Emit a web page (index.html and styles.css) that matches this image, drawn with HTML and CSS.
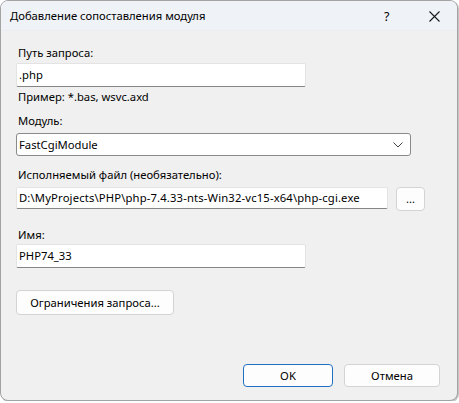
FILE: index.html
```html
<!DOCTYPE html>
<html lang="ru">
<head>
<meta charset="utf-8">
<title>Добавление сопоставления модуля</title>
<link rel="stylesheet" href="styles.css">
</head>
<body>
<div class="window">
  <div class="titlebar">
    <span class="title">Добавление сопоставления модуля</span>
    <span class="help">?</span>
    <span class="close">
      <svg width="11" height="11" viewBox="0 0 11 11"><path d="M0.5 0.5 L10.5 10.5 M10.5 0.5 L0.5 10.5" stroke="#1a1a1a" stroke-width="1.1" fill="none"/></svg>
    </span>
  </div>
  <div class="content">
    <div class="label first">Путь запроса:</div>
    <div class="input short">.php</div>
    <div class="hint">Пример: *.bas, wsvc.axd</div>
    <div class="label l-module">Модуль:</div>
    <div class="select">
      <span>FastCgiModule</span>
      <svg width="10" height="6" viewBox="0 0 10 6"><path d="M0.5 0.5 L5 5 L9.5 0.5" stroke="#444" stroke-width="1" fill="none"/></svg>
    </div>
    <div class="label l-exe">Исполняемый файл (необязательно):</div>
    <div class="row">
      <div class="input exe">D:\MyProjects\PHP\php-7.4.33-nts-Win32-vc15-x64\php-cgi.exe</div>
      <button class="btn browse">...</button>
    </div>
    <div class="label l-name">Имя:</div>
    <div class="input short">PHP74_33</div>
    <button class="btn limits">Ограничения запроса...</button>
    <div class="footer">
      <button class="btn ok">OK</button>
      <button class="btn cancel">Отмена</button>
    </div>
  </div>
</div>
</body>
</html>
```
FILE: styles.css
```css
html, body {
  margin: 0;
  padding: 0;
  background: #ffffff;
}
body {
  font-family: "Segoe UI", "Noto Sans", "Liberation Sans", sans-serif;
  font-size: 11.25px;
  color: #000;
}
.window {
  box-sizing: border-box;
  width: 458px;
  height: 401px;
  border: 1px solid #a3a3a3;
  border-radius: 8px;
  background: #f0f0f0;
  overflow: hidden;
  box-shadow: 1px 1px 0 #c4c4c4;
}
.titlebar {
  height: 30px;
  display: flex;
  align-items: center;
  background: #eff3f8;
  border-bottom: 1px solid #e9edf2;
  box-sizing: border-box;
}
.title {
  padding-left: 9px;
  flex: 1;
  line-height: 16px;
  margin-top: 1px;
}
.help {
  width: 12px;
  margin-right: 33px;
  margin-top: 1px;
  font-size: 12.5px;
}
.close {
  display: flex;
  margin-right: 17px;
  margin-top: 1px;
}
.content {
  padding: 14px 0 0 15px;
}
.label, .hint {
  line-height: 16px;
  height: 16px;
  padding-left: 2px;
}
.label.first { margin-bottom: 2px; }
.input {
  box-sizing: border-box;
  background: #fff;
  border: 1px solid #e3e3e3;
  border-bottom-color: #858585;
  border-radius: 2px;
  height: 24px;
  line-height: 22px;
  padding-left: 2px;
  white-space: nowrap;
  overflow: hidden;
}
.input.short { width: 290px; }
.hint { margin-top: 2px; }
.l-module { margin-top: 8px; margin-bottom: 4px; }
.select {
  box-sizing: border-box;
  width: 395px;
  height: 23px;
  background: #fff;
  border: 1px solid #8a8a8a;
  border-radius: 3px;
  display: flex;
  align-items: center;
  justify-content: space-between;
  padding: 0 7px 0 2px;
}
.l-exe { margin-top: 11px; margin-bottom: 4px; }
.row {
  display: flex;
  align-items: flex-start;
  gap: 8px;
}
.input.exe {
  width: 372px;
  height: 22px;
  line-height: 20px;
  letter-spacing: 0.15px;
}
.btn {
  box-sizing: border-box;
  font: inherit;
  color: #000;
  background: #fdfdfd;
  border: 1px solid #d3d3d3;
  border-radius: 4px;
  padding: 0;
  margin: 0;
}
.browse {
  width: 29px;
  height: 24px;
  line-height: 20px;
}
.l-name { margin-top: 16px; margin-bottom: 1px; }
.limits {
  display: block;
  margin-top: 22px;
  width: 158px;
  height: 25px;
}
.footer {
  display: flex;
  gap: 11px;
  margin-top: 49px;
  padding-left: 227px;
}
.ok, .cancel {
  height: 23px;
}
.ok {
  width: 90px;
  border-color: #1f6fc4;
}
.cancel {
  width: 96px;
}
```
